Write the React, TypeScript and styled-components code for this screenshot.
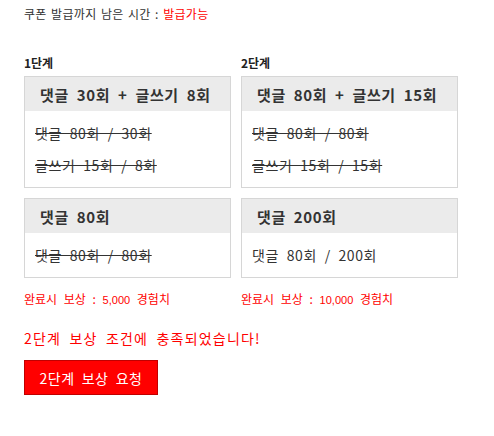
import React from "react";
import styled, { createGlobalStyle } from "styled-components";

const GlobalStyle = createGlobalStyle`
  body {
    margin: 0;
    background: #fff;
    font-family: "Noto Sans CJK KR", "Liberation Sans", sans-serif;
    color: #333;
    word-spacing: 0.25em;
  }
`;

interface Stage {
  label: string;
  width: number;
  title: string;
  rows: { text: string; done: boolean }[];
}

const upper: Stage[] = [
  {
    label: "1단계",
    width: 207,
    title: "댓글 30회 + 글쓰기 8회",
    rows: [
      { text: "댓글 80회 / 30회", done: true },
      { text: "글쓰기 15회 / 8회", done: true },
    ],
  },
  {
    label: "2단계",
    width: 217,
    title: "댓글 80회 + 글쓰기 15회",
    rows: [
      { text: "댓글 80회 / 80회", done: true },
      { text: "글쓰기 15회 / 15회", done: true },
    ],
  },
];

const lower: (Stage & { reward: string })[] = [
  {
    label: "",
    width: 207,
    title: "댓글 80회",
    rows: [{ text: "댓글 80회 / 80회", done: true }],
    reward: "5,000",
  },
  {
    label: "",
    width: 217,
    title: "댓글 200회",
    rows: [{ text: "댓글 80회 / 200회", done: false }],
    reward: "10,000",
  },
];

const App = () => {
  return (
    <Page>
      <GlobalStyle />
      <Timer>
        쿠폰 발급까지 남은 시간 : <Red>발급가능</Red>
      </Timer>
      <Columns>
        {upper.map((s, i) => (
          <Column key={s.label} width={s.width}>
            <StageLabel>{s.label}</StageLabel>
            <Card>
              <CardHead>{s.title}</CardHead>
              <CardBody>
                {s.rows.map((r) => (
                  <Row key={r.text} done={r.done}>
                    {r.text}
                  </Row>
                ))}
              </CardBody>
            </Card>
            <Card>
              <CardHead>{lower[i].title}</CardHead>
              <CardBody>
                {lower[i].rows.map((r) => (
                  <Row key={r.text} done={r.done}>
                    {r.text}
                  </Row>
                ))}
              </CardBody>
            </Card>
            <Reward>
              완료시 보상 : <Num>{lower[i].reward}</Num> 경험치
            </Reward>
          </Column>
        ))}
      </Columns>
      <Message>2단계 보상 조건에 충족되었습니다!</Message>
      <RequestButton>2단계 보상 요청</RequestButton>
    </Page>
  );
};

export default App;

const Page = styled.div`
  padding: 6px 24px 20px;
  display: flex;
  flex-direction: column;
  align-items: flex-start;
`;

const Timer = styled.div`
  font-size: 12px;
  line-height: 16px;
  letter-spacing: 0.3px;
  word-spacing: 0.12em;
  color: #333;
`;

const Red = styled.span`
  color: #ff0000;
`;

const Columns = styled.div`
  display: flex;
  gap: 10px;
  margin-top: 34px;
`;

const Column = styled.div<{ width: number }>`
  width: ${(p) => p.width}px;
  display: flex;
  flex-direction: column;
  gap: 10px;
`;

const StageLabel = styled.div`
  font-size: 12px;
  font-weight: bold;
  line-height: 14px;
  color: #222;
  margin-bottom: -4px;
  word-spacing: normal;
`;

const Card = styled.div`
  border: 1px solid #d6d6d6;
  background: #fff;
`;

const CardHead = styled.div`
  height: 34px;
  display: flex;
  align-items: center;
  padding-left: 15px;
  background: #ebebeb;
  font-size: 15px;
  font-weight: bold;
  letter-spacing: 0.6px;
  color: #333;
`;

const CardBody = styled.div`
  padding: 6px 10px;
`;

const Row = styled.div<{ done: boolean }>`
  font-size: 14px;
  line-height: 32px;
  letter-spacing: 0.6px;
  color: #333;
  text-decoration: ${(p) => (p.done ? "line-through" : "none")};
`;

const Reward = styled.div`
  font-size: 12px;
  line-height: 16px;
  color: #ff0000;
  margin-top: 3px;
`;

const Num = styled.span`
  font-family: "Liberation Sans", sans-serif;
  font-size: 11px;
  word-spacing: normal;
`;

const Message = styled.div`
  margin-top: 21px;
  font-size: 14px;
  line-height: 18px;
  letter-spacing: 1.2px;
  color: #ff0000;
`;

const RequestButton = styled.button`
  margin-top: 13px;
  width: 134px;
  height: 35px;
  background: #ff0000;
  border: 1px solid #c00000;
  color: #fff;
  font-family: "Noto Sans CJK KR", "Liberation Sans", sans-serif;
  font-size: 14px;
  letter-spacing: 0.5px;
  word-spacing: 0.25em;
  padding: 0;
  cursor: pointer;
`;
